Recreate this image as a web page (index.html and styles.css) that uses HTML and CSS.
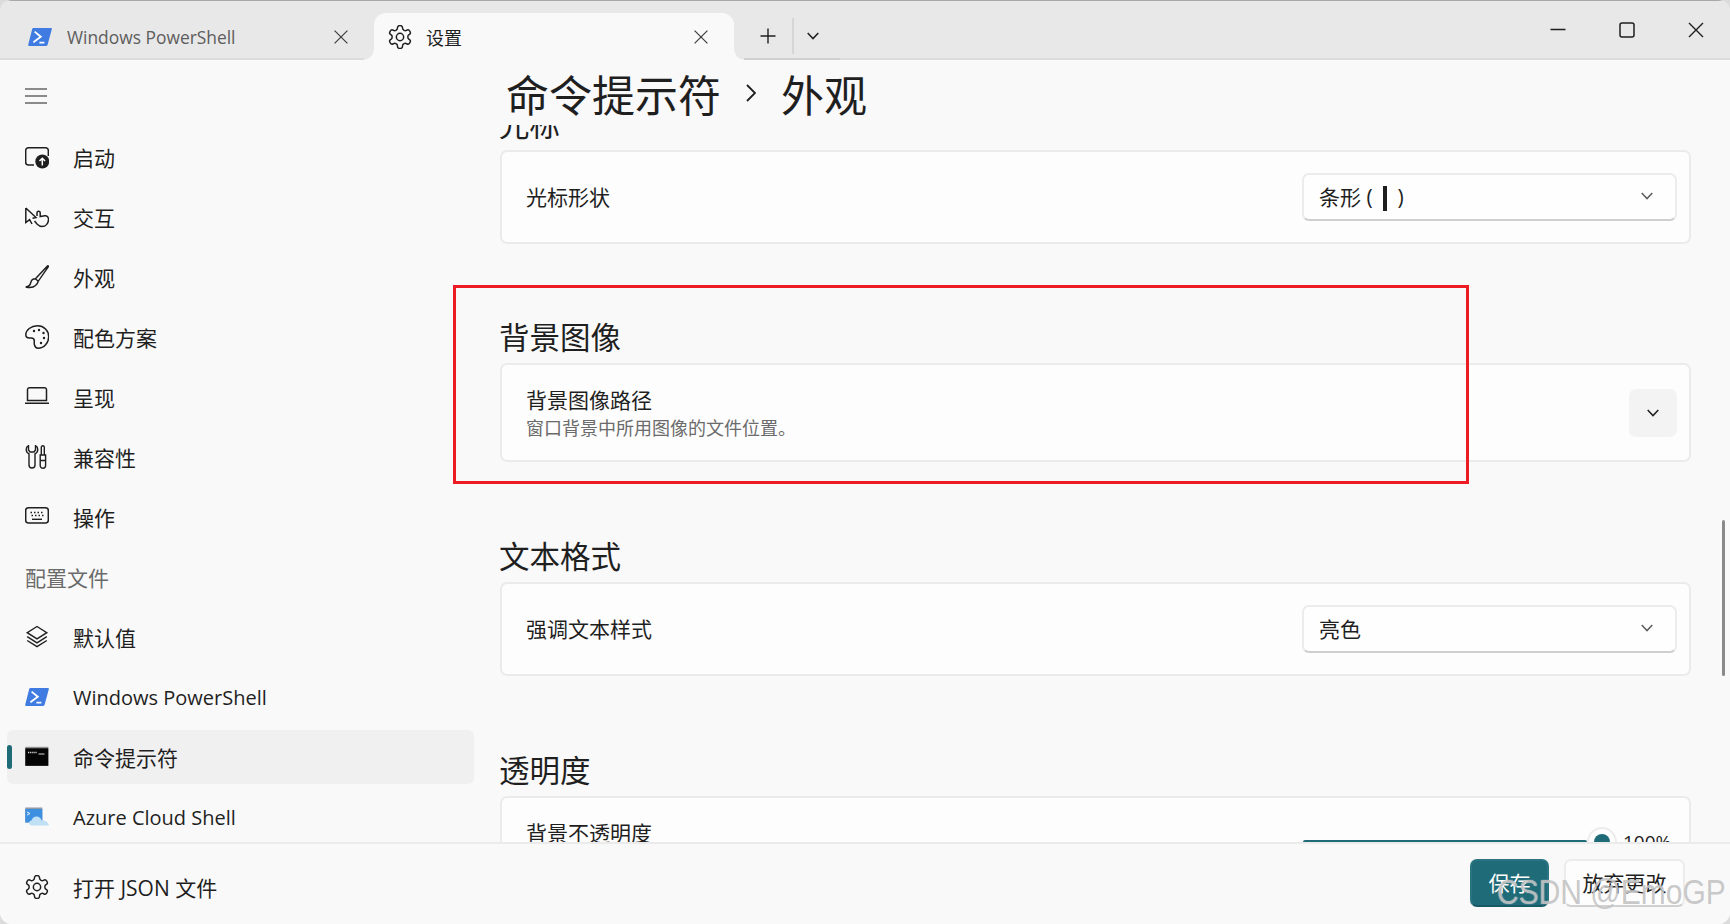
FILE: index.html
```html
<!DOCTYPE html>
<html lang="zh-CN">
<head>
  <meta charset="UTF-8" />
  <title>设置</title>
  <link rel="stylesheet" href="styles.css">
</head>
<body>
  <svg class="sprite" width="0" height="0">
    <symbol id="gear" viewBox="1.5 1.5 21 21">
      <path fill="none" stroke="currentColor" stroke-width="1.3" d="M12.22 2h-.44a2 2 0 0 0-2 2v.18a2 2 0 0 1-1 1.73l-.43.25a2 2 0 0 1-2 0l-.15-.08a2 2 0 0 0-2.73.73l-.22.38a2 2 0 0 0 .73 2.73l.15.1a2 2 0 0 1 1 1.72v.51a2 2 0 0 1-1 1.74l-.15.09a2 2 0 0 0-.73 2.73l.22.38a2 2 0 0 0 2.73.73l.15-.08a2 2 0 0 1 2 0l.43.25a2 2 0 0 1 1 1.73V20a2 2 0 0 0 2 2h.44a2 2 0 0 0 2-2v-.18a2 2 0 0 1 1-1.73l.43-.25a2 2 0 0 1 2 0l.15.08a2 2 0 0 0 2.73-.73l.22-.39a2 2 0 0 0-.73-2.73l-.15-.08a2 2 0 0 1-1-1.74v-.5a2 2 0 0 1 1-1.74l.15-.09a2 2 0 0 0 .73-2.73l-.22-.38a2 2 0 0 0-2.73-.73l-.15.08a2 2 0 0 1-2 0l-.43-.25a2 2 0 0 1-1-1.73V4a2 2 0 0 0-2-2z"/>
      <circle cx="12" cy="12" r="3.200" fill="none" stroke="currentColor" stroke-width="1.300"/>
    </symbol>
    <symbol id="ps" viewBox="0 0 24 24">
      <path fill="#3f7be0" d="M5.400 3h17.400c.8 0 1.200.5 1 1.200l-4.200 15.600c-.2.7-.7 1.200-1.400 1.200H1.200c-.8 0-1.200-.5-1-1.200L4.200 4c.2-.6.6-1 1.200-1z"/>
      <path fill="none" stroke="#fff" stroke-width="1.800" d="M6.600 6.600l6.200 5.200-7.400 5.400M11.400 17.600h5"/>
    </symbol>
    <symbol id="chev" viewBox="0 0 12 8">
      <path fill="none" stroke="currentColor" stroke-width="1.500" d="M.7 1l5.300 5.600L11.300 1"/>
    </symbol>
    <symbol id="x" viewBox="0 0 14 14">
      <path fill="none" stroke="currentColor" stroke-width="1.200" d="M.6.6l12.800 12.800M13.400.6L.6 13.400"/>
    </symbol>
  </svg>

  <div class="window">
    <!-- Tabs -->
    <div class="titlebar">
      <div class="tab">
        <svg class="tab-icon"><use href="#ps"/></svg>
        <span class="latin">Windows PowerShell</span>
        <svg class="tab-close"><use href="#x"/></svg>
      </div>
      <div class="tab tab-active">
        <svg class="tab-icon"><use href="#gear"/></svg>
        <span>设置</span>
        <svg class="tab-close"><use href="#x"/></svg>
      </div>
      <div class="tab-actions">
        <svg class="plus" viewBox="0 0 16 16"><path fill="none" stroke="currentColor" stroke-width="1.400" d="M8 .5v15M.5 8h15"/></svg>
        <span class="tab-divider"></span>
        <svg class="tab-chev"><use href="#chev"/></svg>
      </div>
      <div class="caption">
        <div class="caption-btn"><svg viewBox="0 0 16 16"><path stroke="currentColor" stroke-width="1.500" d="M.5 7.500h15"/></svg></div>
        <div class="caption-btn"><svg viewBox="0 0 16 16"><rect x="1" y="1" width="14" height="14" rx="2" fill="none" stroke="currentColor" stroke-width="1.500"/></svg></div>
        <div class="caption-btn"><svg viewBox="0 0 16 16"><path fill="none" stroke="currentColor" stroke-width="1.400" d="M1 1l14 14M15 1L1 15"/></svg></div>
      </div>
    </div>

    <div class="main">
      <!-- Sidebar -->
      <div class="sidebar">
        <div class="hamburger">
          <svg viewBox="0 0 22 16"><path stroke="currentColor" stroke-width="1.200" d="M0 1h22M0 8h22M0 15h22"/></svg>
        </div>
        <div class="nav">
          <div class="nav-item">
            <svg class="icon" viewBox="0 0 24 24"><path fill="none" stroke="currentColor" stroke-width="1.500" d="M9 20H3.400A2.700 2.700 0 0 1 .7 17.300V5.400A2.700 2.700 0 0 1 3.400 2.700h17.200a2.700 2.700 0 0 1 2.700 2.700V11"/><circle cx="17.300" cy="16.500" r="7" fill="#1f1f1f"/><path fill="none" stroke="#fff" stroke-width="1.500" d="M17.300 20.500v-7M14.500 16l2.800-2.800 2.800 2.800"/></svg>
            <span>启动</span>
          </div>
          <div class="nav-item">
            <svg class="icon" viewBox="0 0 24 24"><path fill="none" stroke="currentColor" stroke-width="1.500" d="M.8 3v14.500l3.800-2.900L7 19M.8 3l10.200 9.500-3.500.8"/><path fill="none" stroke="currentColor" stroke-width="1.500" d="M12 11V7.800a1.600 1.600 0 0 1 3.200 0v3.700l4.500-.7c2.500-.3 4 1.600 3.800 4-.3 3.600-2.800 6.700-6.500 6.700-2 0-3.500-1-5-2.500l-2.500-3"/></svg>
            <span>交互</span>
          </div>
          <div class="nav-item">
            <svg class="icon" viewBox="0 0 24 24"><path fill="none" stroke="currentColor" stroke-width="1.400" d="M22.600.9c.6-.3 1.100.2.800.8L13.200 16.300l-2.800-2.600zM10.400 13.700c-3 0-4.200 1.800-4.600 3.800-.4 2.200-2.100 4-5.100 4.500 3 .7 7.700.5 9.800-1.500 1.500-1.500 2.500-2.700 2.700-4.200"/></svg>
            <span>外观</span>
          </div>
          <div class="nav-item">
            <svg class="icon" viewBox="0 0 24 24"><path fill="none" stroke="currentColor" stroke-width="1.500" d="M12.500.8C6 .8.800 5 .8 9.800c0 2 1.500 3.200 3.500 3.200h2c2 0 3 1 3 3 0 1.500-.3 2.500.2 4 .6 2.100 2 3.200 3.500 3.200 6 0 10.700-5.500 10.700-11.500S19 .8 12.500.8z"/><g fill="currentColor"><circle cx="9" cy="6" r="1.200"/><circle cx="14" cy="5" r="1.200"/><circle cx="18.500" cy="8" r="1.200"/><circle cx="19" cy="13" r="1.200"/><circle cx="16" cy="18" r="1.200"/></g></svg>
            <span>配色方案</span>
          </div>
          <div class="nav-item">
            <svg class="icon" viewBox="0 0 24 24"><path fill="none" stroke="currentColor" stroke-width="1.500" d="M4.500 2.700h15a2 2 0 0 1 2 2V15.400H2.500V4.700a2 2 0 0 1 2-2zM0 18.300h24"/></svg>
            <span>呈现</span>
          </div>
          <div class="nav-item">
            <svg class="icon" viewBox="0 0 24 24"><path fill="none" stroke="currentColor" stroke-width="1.400" d="M3.500.7C2 1.400 1.200 3 1.200 4.500c0 2 1.200 3.500 2.800 4.300V20a3 3 0 0 0 6 0V8.800c1.600-.8 2.800-2.300 2.800-4.300 0-1.500-.8-3.100-2.300-3.800V5L9 7H5L3.500 5zM16.300 10V2.300a1.500 1.500 0 0 1 3 0V10M15.200 10h5.400v10.500a2.700 2.700 0 0 1-5.400 0zM15.200 15.500h5.400"/></svg>
            <span>兼容性</span>
          </div>
          <div class="nav-item">
            <svg class="icon" viewBox="0 0 24 24"><rect x=".7" y="2.700" width="22.600" height="15.300" rx="2.800" fill="none" stroke="currentColor" stroke-width="1.500"/><path stroke="currentColor" stroke-width="1.500" stroke-dasharray="1.500 2" d="M5.500 7.500h14M6.500 10.500h12"/><path stroke="currentColor" stroke-width="1.400" d="M7 14.300h10"/></svg>
            <span>操作</span>
          </div>
          <div class="nav-header">配置文件</div>
          <div class="nav-item">
            <svg class="icon" viewBox="0 0 24 24"><path fill="none" stroke="currentColor" stroke-width="1.400" d="M12 1.500l9.800 6.200L12 13.900 2.200 7.700zM2.200 11.600L12 17.800l9.800-6.200M2.200 15.500L12 21.700l9.800-6.200"/></svg>
            <span>默认值</span>
          </div>
          <div class="nav-item">
            <svg class="icon"><use href="#ps"/></svg>
            <span class="latin">Windows PowerShell</span>
          </div>
          <div class="nav-item nav-selected">
            <svg class="icon" viewBox="0 0 24 24"><rect x=".3" y="1.800" width="23" height="19" fill="#8f8f8f"/><rect x=".3" y="3.300" width="23" height="17.500" fill="#050505"/><path stroke="#d8d8d8" stroke-width="1.300" stroke-dasharray="1.300 .8" d="M3 7.500h9"/><path stroke="#d8d8d8" stroke-width="1" d="M13.500 9h6"/></svg>
            <span>命令提示符</span>
          </div>
          <div class="nav-item">
            <svg class="icon" viewBox="0 0 24 24"><rect x=".3" y="2.500" width="17" height="15" fill="#8f98a3"/><rect x=".3" y="4" width="17" height="13.500" fill="#3d8fe0"/><path stroke="#e6f2fc" stroke-width="1" fill="none" d="M2 7l3 1.500L2 10"/><path fill="#bfe0f5" d="M7 20.500c-2 0-3-1.200-3-2.500s1-2.400 2.500-2.500c.7-2.500 2.800-4 5-4 2.700 0 4.700 1.700 5.200 4 3-.5 6.800 1.200 7.300 5z"/></svg>
            <span class="latin">Azure Cloud Shell</span>
          </div>
        </div>
      </div>

      <!-- Settings -->
      <div class="content">
        <div class="breadcrumb">
          <span>命令提示符</span>
          <svg viewBox="0 0 10 18"><path fill="none" stroke="currentColor" stroke-width="1.800" d="M1 1l8 8-8 8"/></svg>
          <span>外观</span>
        </div>
        <div class="scroller">
          <div class="section section-first">
            <h2>光标</h2>
            <div class="card">
              <div class="card-title">光标形状</div>
              <div class="select">
                <span>条形 ( <i class="bar"></i> )</span>
                <svg class="select-chev"><use href="#chev"/></svg>
              </div>
            </div>
          </div>

          <div class="section">
            <h2>背景图像</h2>
            <div class="card card-tall">
              <div class="card-text">
                <div class="card-title">背景图像路径</div>
                <div class="card-desc">窗口背景中所用图像的文件位置。</div>
              </div>
              <div class="expander"><svg><use href="#chev"/></svg></div>
            </div>
          </div>

          <div class="section">
            <h2>文本格式</h2>
            <div class="card">
              <div class="card-title">强调文本样式</div>
              <div class="select">
                <span>亮色</span>
                <svg class="select-chev"><use href="#chev"/></svg>
              </div>
            </div>
          </div>

          <div class="section">
            <h2>透明度</h2>
            <div class="card card-tall card-top">
              <div>
                <div class="card-title">背景不透明度</div>
                <div class="card-desc">设置窗口背景的不透明度。</div>
              </div>
              <div class="slider">
                <div class="track"></div>
                <div class="thumb"><div class="thumb-dot"></div></div>
                <span class="slider-value">100%</span>
              </div>
            </div>
          </div>
        </div>
      </div>

      <div class="scrollbar"></div>
    </div>

    <!-- Footer -->
    <div class="footer">
      <div class="nav-item footer-item">
        <svg class="icon"><use href="#gear"/></svg>
        <span>打开 JSON 文件</span>
      </div>
      <div class="footer-buttons">
        <div class="btn btn-save">保存</div>
        <div class="btn btn-discard">放弃更改</div>
      </div>
    </div>

    <div class="highlight"></div>
    <div class="watermark">CSDN @EmoGP</div>
  </div>
</body>
</html>
```

FILE: styles.css
```css
* {
  box-sizing: border-box;
}

html, body {
  margin: 0;
  height: 100%;
  background: #dcdcdc;
}

body {
  font-family: "Open Sans", "Noto Sans CJK SC", sans-serif;
  font-size: 21px;
  color: #1f1f1f;
  overflow: hidden;
}

.sprite {
  position: absolute;
}

svg {
  display: block;
  flex: none;
}

.latin {
  font-size: 20px;
}

.window {
  position: relative;
  width: 1730px;
  height: 924px;
  display: flex;
  flex-direction: column;
  background: #f9f9f9;
  border-radius: 12px;
  overflow: hidden;
}

/* title bar */
.titlebar {
  height: 60px;
  flex: none;
  display: flex;
  align-items: flex-end;
  background: #e8e8e8;
  border-top: 1px solid #a8a8a8;
  border-bottom: 2px solid #dcdcdc;
}

.tab {
  width: 374px;
  height: 47px;
  margin-bottom: -2px;
  padding: 0 26px 0 28px;
  display: flex;
  align-items: center;
  gap: 15px;
  font-size: 18px;
  color: #5d5d5d;
}

.tab .latin {
  font-size: 17.4px;
}

.tab-icon {
  width: 24px;
  height: 24px;
}

.tab-close {
  width: 14px;
  height: 14px;
  margin-left: auto;
  color: #3c3c3c;
}

.tab-active {
  position: relative;
  width: 360px;
  padding-left: 14px;
  gap: 14px;
  background: #f9f9f9;
  border-radius: 12px 12px 0 0;
  color: #1f1f1f;
}

.tab-active::before,
.tab-active::after {
  content: "";
  position: absolute;
  bottom: 0;
  width: 10px;
  height: 10px;
}

.tab-active::before {
  left: -10px;
  background: radial-gradient(circle at 0 0, #e8e8e8 9px, #f9f9f9 10px);
}

.tab-active::after {
  right: -10px;
  background: radial-gradient(circle at 100% 0, #e8e8e8 9px, #f9f9f9 10px);
}

.tab-actions {
  width: 96px;
  height: 47px;
  margin-left: 10px;
  margin-bottom: -2px;
  padding-left: 16px;
  display: flex;
  align-items: center;
  border-bottom: 2px solid #cfcfcf;
}

.plus {
  width: 16px;
  height: 16px;
}

.tab-divider {
  width: 2px;
  height: 36px;
  margin: 0 13px 0 16px;
  background: #d6d6d6;
}

.tab-chev {
  width: 12px;
  height: 8px;
}

.caption {
  margin-left: auto;
  align-self: stretch;
  display: flex;
}

.caption-btn {
  width: 69px;
  display: flex;
  align-items: center;
  justify-content: center;
  padding-top: 1px;
}

.caption-btn svg {
  width: 16px;
  height: 16px;
}

/* main area */
.main {
  flex: 1;
  min-height: 0;
  display: flex;
  position: relative;
}

.sidebar {
  width: 480px;
  flex: none;
  padding: 0 6px 0 7px;
  overflow: hidden;
}

.hamburger {
  height: 70px;
  padding: 2px 0 0 18px;
  display: flex;
  align-items: center;
}

.hamburger svg {
  width: 22px;
  height: 16px;
}

.nav {
  display: flex;
  flex-direction: column;
  gap: 6px;
}

.nav-item {
  position: relative;
  height: 54px;
  flex: none;
  padding-left: 18px;
  display: flex;
  align-items: center;
  gap: 24px;
  border-radius: 6px;
}

.nav-header {
  height: 54px;
  flex: none;
  padding-left: 18px;
  display: flex;
  align-items: center;
  color: #6b6b6b;
}

.nav-selected {
  background: #f0f0f0;
}

.nav-selected::before {
  content: "";
  position: absolute;
  left: 0;
  top: 15px;
  width: 5px;
  height: 24px;
  border-radius: 3px;
  background: #1f6b78;
}

.icon {
  width: 24px;
  height: 24px;
}

/* settings column */
.content {
  flex: 1;
  min-width: 0;
  display: flex;
  flex-direction: column;
  padding: 0 39px 0 20px;
}

.breadcrumb {
  height: 65px;
  flex: none;
  padding: 1px 0 0 6px;
  display: flex;
  align-items: center;
  gap: 25px;
  font-size: 43px;
}

.breadcrumb svg {
  width: 10px;
  height: 18px;
}

.scroller {
  flex: 1;
  min-height: 0;
  overflow: hidden;
}

.section {
  margin-bottom: 76px;
}

.section-first {
  margin-top: -19px;
  margin-bottom: 75px;
}

h2 {
  margin: 0 0 4px -1px;
  height: 40px;
  font-size: 30.5px;
  font-weight: 400;
  line-height: 36px;
}

.card {
  min-height: 94px;
  padding: 0 12px 0 24px;
  display: flex;
  align-items: center;
  justify-content: space-between;
  background: #fdfdfd;
  border: 2px solid #ebebeb;
  border-radius: 7px;
}

.card-tall {
  min-height: 99px;
}

.card-text {
  padding-top: 3px;
}

.card-top {
  align-items: flex-start;
  padding-top: 22px;
}

.card-title {
  line-height: 27px;
}

.card-desc {
  font-size: 18px;
  line-height: 28px;
  color: #6b6b6b;
}

.select {
  width: 375px;
  height: 48px;
  padding: 0 22px 2px 15px;
  display: flex;
  align-items: center;
  justify-content: space-between;
  background: #fefefe;
  border: 2px solid #ececec;
  border-bottom-color: #cfcfcf;
  border-radius: 7px;
}

.select-chev {
  width: 12px;
  height: 8px;
  color: #5f5f5f;
}

.bar {
  display: inline-block;
  width: 4px;
  height: 25px;
  margin: 0 5px;
  vertical-align: -6px;
  background: #1f1f1f;
}

.expander {
  width: 48px;
  height: 48px;
  display: flex;
  align-items: center;
  justify-content: center;
  background: #f3f3f3;
  border-radius: 7px;
}

.expander svg {
  width: 12px;
  height: 8px;
}

.slider {
  width: 365px;
  height: 48px;
  margin: -2px 9px 0 0;
  display: flex;
  align-items: center;
}

.track {
  flex: 1;
  height: 4px;
  border-radius: 2px;
  background: #1f6b78;
}

.thumb {
  width: 30px;
  height: 30px;
  margin-right: 6px;
  display: flex;
  align-items: center;
  justify-content: center;
  background: #fff;
  border: 2px solid #ececec;
  border-radius: 50%;
}

.thumb-dot {
  width: 16px;
  height: 16px;
  border-radius: 50%;
  background: #1f6b78;
}

.slider-value {
  width: 45px;
  font-size: 19px;
  white-space: nowrap;
}

.scrollbar {
  position: absolute;
  left: 1722px;
  top: 460px;
  width: 3px;
  height: 156px;
  border-radius: 2px;
  background: #8a8a8a;
}

/* footer */
.footer {
  height: 82px;
  flex: none;
  padding: 0 45px 0 7px;
  display: flex;
  justify-content: space-between;
  background: #f9f9f9;
  border-top: 2px solid #ebebeb;
}

.footer-item {
  margin-top: 16px;
}

.footer-buttons {
  padding-top: 15px;
  display: flex;
  gap: 15px;
}

.btn {
  width: 79px;
  height: 48px;
  padding-bottom: 2px;
  display: flex;
  align-items: center;
  justify-content: center;
  background: #fdfdfd;
  border: 2px solid #ececec;
  border-bottom-color: #d0d0d0;
  border-radius: 7px;
}

.btn-discard {
  width: 121px;
}

.btn-save {
  color: #fff;
  background: #1f6b78;
  border-color: #2a7381;
  border-bottom-color: #185a66;
}

/* screenshot markup */
.highlight {
  position: absolute;
  left: 453px;
  top: 285px;
  width: 1016px;
  height: 199px;
  border: 3px solid #ed1c24;
}

.watermark {
  position: absolute;
  left: 1497px;
  top: 875px;
  font-family: "Liberation Sans", sans-serif;
  font-size: 30px;
  line-height: 36px;
  white-space: nowrap;
  color: rgba(170, 170, 170, 0.65);
  text-shadow: 0 0 1px rgba(255, 255, 255, 0.8);
  transform: scaleY(1.15);
}
```
